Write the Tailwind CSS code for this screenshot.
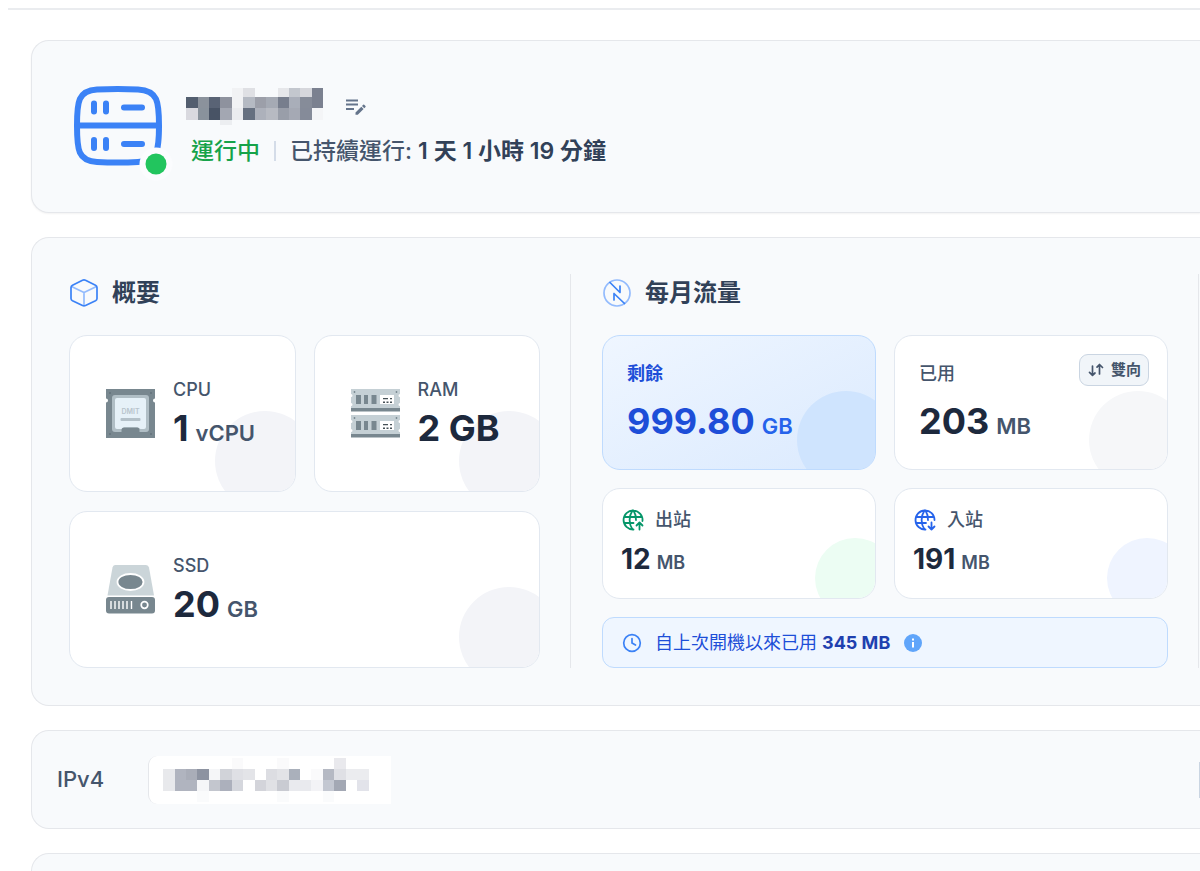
<!DOCTYPE html>
<html lang="zh-Hant">
<head>
    <meta charset="UTF-8">
    <meta name="viewport" content="width=device-width, initial-scale=1.0">
    <title>伺服器概要</title>
    <script src="https://cdn.jsdelivr.net/npm/@tailwindcss/browser@4"></script>
</head>
<body class="bg-white overflow-hidden font-['Inter','Noto_Sans_CJK_TC',sans-serif] text-slate-600 h-screen flex flex-col">
    <!-- Header bottom line -->
    <div class="ml-2 mt-2 h-[2px] shrink-0 bg-gray-200/80"></div>

    <main class="ml-[31px] mt-[30px] flex min-h-0 flex-1 flex-col gap-6">
        <!-- Server status -->
        <section class="flex shrink-0 items-start gap-[22px] rounded-l-[18px] border border-r-0 border-gray-200 bg-slate-50 pt-[43px] pb-11 pl-10 shadow-xs">
            <svg class="h-[84px] w-[92px] shrink-0 overflow-visible" viewBox="0 0 92 84" fill="none" stroke="#3b82f6" stroke-width="6" stroke-linecap="round">
                <path d="M5 41.500C5 18 6 6.500 25 5.500Q46 4.500 66 5.500C86 6.500 87 18 87 41.500C87 66 86 77 66 78Q46 79 25 78C6 77 5 66 5 41.500ZM5 41.500H87"/>
                <path d="M22 19.500V27.500M34 19.500V27.500M52 23.500H70M22 56V64M34 56V64M52 60H70"/>
                <circle cx="84" cy="80" r="16.500" fill="#fbfcfe" stroke="none"/>
                <circle cx="84" cy="80" r="10.500" fill="#22c55e" stroke="none"/>
            </svg>
            <div class="pt-1">
                <div class="flex items-center gap-[22px]">
                    <svg class="h-[37px] w-[138px]" viewBox="0 0 138 37" shape-rendering="crispEdges">
                        <path fill="#f1f2f4" d="M46 0h11v20H46z"/><path fill="#dfe0e4" d="M57 0h12v9H57z"/><path fill="#e6e7ea" d="M92 0h11v9H92z"/><path fill="#c3c7ce" d="M103 0h11v9h-11z"/><path fill="#d6d7dc" d="M114 0h12v9h-12z"/><path fill="#7b8190" d="M126 0h11v20h-11z"/>
                        <path fill="#535e6f" d="M0 9h12v11H0z"/><path fill="#8b929c" d="M12 9h11v11H12z"/><path fill="#596375" d="M23 9h11v11H23z"/><path fill="#8e929e" d="M34 9h12v11H34z"/><path fill="#b5bac3" d="M57 9h12v11H57z"/><path fill="#9c9fa9" d="M69 9h11v11H69z"/><path fill="#a5aab4" d="M80 9h12v11H80z"/><path fill="#777e8d" d="M92 9h11v11H92z"/><path fill="#a9aeb9" d="M103 9h11v11h-11z"/><path fill="#868c99" d="M114 9h12v11h-12z"/>
                        <path fill="#d9d9df" d="M0 20h12v12H0z"/><path fill="#89929c" d="M12 20h11v12H12z"/><path fill="#485365" d="M23 20h11v12H23z"/><path fill="#a3a7b2" d="M34 20h12v12H34z"/><path fill="#ebecef" d="M46 20h11v12H46z"/><path fill="#667080" d="M57 20h12v12H57z"/><path fill="#adb1bb" d="M69 20h11v12H69z"/><path fill="#b7bac2" d="M80 20h12v12H80z"/><path fill="#999ea9" d="M92 20h11v12H92z"/><path fill="#a5a9b4" d="M103 20h11v12h-11z"/><path fill="#858b99" d="M114 20h12v12h-12z"/><path fill="#f4f5f7" d="M126 20h11v12h-11z"/>
                        <path fill="#eceef1" d="M34 32h12v5H34z"/>
                    </svg>
                    <button type="button" aria-label="編輯">
                        <svg class="h-5 w-5" viewBox="0 0 20 20" fill="none" stroke="#64748b" stroke-width="1.900">
                            <path d="M0 3.500H12M0 7.500H12M0 12H8"/>
                            <path fill="#64748b" stroke="none" d="M9.500 15.500L15.300 9.700L17.600 12L11.800 17.800H9.500ZM16 9L17.200 7.800Q17.700 7.400 18.200 7.800L19.500 9.100Q19.900 9.600 19.500 10.100L18.300 11.300Z"/>
                        </svg>
                    </button>
                </div>
                <div class="mt-[9px] flex items-center pl-[5px] text-[23px] leading-[34px] font-medium">
                    <span class="text-[#16a34a]">運行中</span>
                    <span class="mx-[14px] h-5 w-[2px] bg-slate-300/80"></span>
                    <span>已持續運行: <span class="font-semibold text-slate-700">1 天 1 小時 19 分鐘</span></span>
                </div>
            </div>
        </section>

        <!-- Specs and traffic -->
        <section class="grid shrink-0 grid-cols-[502fr_627fr_2px] rounded-l-[18px] border border-r-0 border-gray-200 bg-slate-50 pt-9 pb-[37px] pl-[37px]">
            <div class="border-r border-gray-200 pr-[30px]">
                <h2 class="mb-[23px] flex h-[38px] items-center gap-[13px] text-2xl font-semibold text-slate-700">
                    <svg class="h-[30px] w-[30px]" viewBox="0 0 30 30" fill="none" stroke-width="1.700" stroke-linejoin="round">
                        <path stroke="#93bbfd" d="M2.500 8.500L15 14.500L27.500 8.500M15 14.500V27.500"/>
                        <path stroke="#3b82f6" d="M13.500 2.200Q15 1.500 16.500 2.200L26.500 7.200Q28 8 28 9.500V20.500Q28 22 26.500 22.800L16.500 27.600Q15 28.300 13.500 27.600L3.500 22.800Q2 22 2 20.500V9.500Q2 8 3.500 7.200Z"/>
                    </svg>
                    概要
                </h2>
                <div class="grid grid-cols-2 gap-x-[18px] gap-y-[19px]">
                    <div class="relative flex h-[157px] items-center gap-[18px] overflow-hidden rounded-[18px] border border-slate-200 bg-white pl-9">
                        <div class="absolute -right-5 -bottom-5 h-[100px] w-[100px] rounded-full bg-[#f3f4f8]"></div>
                        <svg class="relative h-[49px] w-[49px]" viewBox="0 0 49 49">
                            <path fill="#78878f" d="M0 0H49V9.500a2 2 0 0 0 0 4V49H0V13.500a2 2 0 0 0 0-4Z"/>
                            <rect x="6" y="6" width="37" height="37" rx="3" fill="#b0bec5"/>
                            <path fill="#e6f1f8" d="M11 9H38a2 2 0 0 1 2 2V38a2 2 0 0 1-2 2H34.500L32 38.500H18L15.500 40H11a2 2 0 0 1-2-2V11a2 2 0 0 1 2-2Z"/>
                            <path fill="#78878f" d="M15.500 43V41Q15.500 38.500 18 38.500H31Q33.500 38.500 33.500 41V43Z"/>
                            <rect x="14.500" y="29" width="20" height="3" rx="1" fill="#b4c1c9"/>
                            <text x="24.500" y="24.500" text-anchor="middle" font-size="7" font-weight="600" fill="#b8c4cc">DMIT</text>
                            <g fill="#56656d"><circle cx="4" cy="4" r=".8"/><circle cx="45" cy="4" r=".8"/><circle cx="4" cy="45" r=".8"/><circle cx="45" cy="45" r=".8"/></g>
                        </svg>
                        <div class="relative">
                            <div class="text-lg leading-7 font-medium">CPU</div>
                            <div class="flex items-baseline gap-[7px]">
                                <span class="text-[36px] leading-[48px] font-bold text-slate-800">1</span>
                                <span class="text-[22px] leading-7 font-semibold">vCPU</span>
                            </div>
                        </div>
                    </div>
                    <div class="relative flex h-[157px] items-center gap-[18px] overflow-hidden rounded-[18px] border border-slate-200 bg-white pl-9">
                        <div class="absolute -right-5 -bottom-5 h-[100px] w-[100px] rounded-full bg-[#f3f4f8]"></div>
                        <svg class="relative h-[49px] w-[49px]" viewBox="0 0 49 49">
                            <defs>
                                <g id="stick">
                                    <path fill="#c5d0d5" d="M0 0H49V5a1.500 1.500 0 0 0 0 3V14a1.500 1.500 0 0 0 0 3V19H0V17a1.500 1.500 0 0 0 0-3V8a1.500 1.500 0 0 0 0-3Z"/>
                                    <path fill="#78878f" d="M5 6h5v9H5zM13 6h4v9h-4zM20.500 6h5v9h-5zM0 19H49V22.500H0z"/>
                                    <path fill="#fff" d="M29 6H43V15H29z"/>
                                    <path fill="#465056" d="M32 9h5v1.200h-5zM39 9h2v1.200h-2zM32 12.500h2V14h-2zM35.500 12.500h2V14h-2zM39 12.500h2V14h-2z"/>
                                    <g fill="#78878f"><circle cx="3.500" cy="3" r=".9"/><circle cx="45.500" cy="3" r=".9"/></g>
                                </g>
                            </defs>
                            <use href="#stick"/>
                            <use href="#stick" y="26"/>
                        </svg>
                        <div class="relative">
                            <div class="text-lg leading-7 font-medium">RAM</div>
                            <div class="text-[36px] leading-[48px] font-bold text-slate-800">2 GB</div>
                        </div>
                    </div>
                    <div class="relative col-span-2 flex h-[157px] items-center gap-[18px] overflow-hidden rounded-[18px] border border-slate-200 bg-white pl-9">
                        <div class="absolute -right-5 -bottom-5 h-[100px] w-[100px] rounded-full bg-[#f3f4f8]"></div>
                        <svg class="relative h-[49px] w-[49px]" viewBox="0 0 49 49">
                            <path fill="#cbd5d9" d="M9 0H40Q42.500 0 43 2.500L48 30.500H1.500L6.500 2.500Q7 0 9 0Z"/>
                            <ellipse cx="24.500" cy="17" rx="13" ry="8" fill="#78878f" stroke="#fff" stroke-width="1.800"/>
                            <rect y="32" width="49" height="16.500" rx="3" fill="#78878f"/>
                            <path stroke="#fff" stroke-width="1.400" d="M5 36V44M9 36V44M13 36V44M17 36V44M21 36V44M25.500 36V44"/>
                            <circle cx="38.500" cy="40" r="3.300" fill="none" stroke="#fff" stroke-width="1.700"/>
                        </svg>
                        <div class="relative">
                            <div class="text-lg leading-7 font-medium">SSD</div>
                            <div class="flex items-baseline gap-[7px]">
                                <span class="text-[36px] leading-[48px] font-bold text-slate-800">20</span>
                                <span class="text-[22px] leading-7 font-semibold">GB</span>
                            </div>
                        </div>
                    </div>
                </div>
            </div>

            <div class="pr-[30px] pl-[31px]">
                <h2 class="mb-[23px] flex h-[38px] items-center gap-[13px] text-2xl font-semibold text-slate-700">
                    <svg class="h-[30px] w-[30px]" viewBox="0 0 30 30" fill="none" stroke-width="1.700" stroke-linejoin="round" stroke-linecap="round">
                        <circle cx="15" cy="15" r="13" stroke="#93bbfd"/>
                        <path stroke="#3b82f6" d="M8 4.500L18 14.500V8M22.500 25.500L12 15.500V22"/>
                    </svg>
                    每月流量
                </h2>
                <div class="grid grid-cols-2 gap-[18px]">
                    <div class="relative h-[135px] overflow-hidden rounded-[18px] border border-[#bfdbfe] bg-linear-to-br from-[#eff6ff] to-[#dbeafe] pt-6 pl-6">
                        <div class="absolute -right-5 -bottom-5 h-[98px] w-[98px] rounded-full bg-[#cfe4fe]"></div>
                        <div class="relative text-lg leading-7 font-semibold text-[#1d4ed8]">剩餘</div>
                        <div class="relative mt-[9px] flex items-baseline gap-[7px]">
                            <span class="text-[36px] leading-[48px] font-bold text-[#1d4ed8]">999.80</span>
                            <span class="text-[22px] leading-7 font-semibold text-[#2563eb]">GB</span>
                        </div>
                    </div>
                    <div class="relative h-[135px] overflow-hidden rounded-[18px] border border-slate-200 bg-white pt-6 pl-6">
                        <div class="absolute -right-5 -bottom-5 h-[98px] w-[98px] rounded-full bg-[#f6f7f9]"></div>
                        <div class="relative text-lg leading-7 font-medium">已用</div>
                        <div class="relative mt-[9px] flex items-baseline gap-[7px]">
                            <span class="text-[36px] leading-[48px] font-bold text-slate-800">203</span>
                            <span class="text-[22px] leading-7 font-semibold">MB</span>
                        </div>
                        <button type="button" class="absolute top-[18px] right-[18px] flex h-8 items-center gap-[7px] rounded-[9px] border border-slate-300 bg-slate-100 pr-[7px] pl-2 text-[15px] font-semibold text-slate-600">
                            <svg class="h-4 w-4" viewBox="0 0 16 16" fill="none" stroke="currentColor" stroke-width="1.700" stroke-linecap="round" stroke-linejoin="round">
                                <path d="M4.500 4V13M1.500 10.300L4.500 13.300L7 11M11.500 12V3M9 5.200L11.500 2.500L14.500 5.500"/>
                            </svg>
                            雙向
                        </button>
                    </div>
                    <div class="relative h-[111px] overflow-hidden rounded-[18px] border border-slate-200 bg-white pt-[17px] pl-[18px]">
                        <div class="absolute -right-5 -bottom-5 h-20 w-20 rounded-full bg-[#ecfdf3]"></div>
                        <div class="relative flex items-center gap-[10px] text-lg leading-7 font-medium">
                            <svg class="h-6 w-6" viewBox="0 0 24 24" fill="none" stroke="#059669" stroke-width="1.800" stroke-linecap="round" stroke-linejoin="round">
                                <path d="M21.500 13A9.500 9.500 0 1 0 12.500 21.500M3.200 9H20.800M3.200 15H12.500M11.500 2.500A17 17 0 0 0 11.500 21.500M12.500 2.500A17 17 0 0 1 15 12"/>
                                <path d="M18.500 21.500V14.500M15.500 17.500L18.500 14.500L21.500 17.500"/>
                            </svg>
                            出站
                        </div>
                        <div class="relative mt-[7px] flex items-baseline gap-[6px]">
                            <span class="text-[28px] leading-9 font-bold text-slate-800">12</span>
                            <span class="text-lg leading-6 font-semibold">MB</span>
                        </div>
                    </div>
                    <div class="relative h-[111px] overflow-hidden rounded-[18px] border border-slate-200 bg-white pt-[17px] pl-[18px]">
                        <div class="absolute -right-5 -bottom-5 h-20 w-20 rounded-full bg-[#eff4ff]"></div>
                        <div class="relative flex items-center gap-[10px] text-lg leading-7 font-medium">
                            <svg class="h-6 w-6" viewBox="0 0 24 24" fill="none" stroke="#2563eb" stroke-width="1.800" stroke-linecap="round" stroke-linejoin="round">
                                <path d="M21.500 12A9.500 9.500 0 1 0 12.500 21.500M3.200 9H20.800M3.200 15H13M11.500 2.500A17 17 0 0 0 11.500 21.500M12.500 2.500A17 17 0 0 1 15 12"/>
                                <path d="M18.500 14.500V21.500M15.500 18.500L18.500 21.500L21.500 18.500"/>
                            </svg>
                            入站
                        </div>
                        <div class="relative mt-[7px] flex items-baseline gap-[6px]">
                            <span class="text-[28px] leading-9 font-bold text-slate-800">191</span>
                            <span class="text-lg leading-6 font-semibold">MB</span>
                        </div>
                    </div>
                    <div class="col-span-2 flex h-[51px] items-center rounded-xl border border-[#bfdbfe] bg-[#eff6ff] pl-[18px] text-lg text-[#1d4ed8]">
                        <svg class="mr-3 h-[22px] w-[22px]" viewBox="0 0 22 22" fill="none" stroke="#3b82f6" stroke-width="1.700" stroke-linecap="round">
                            <circle cx="11" cy="11" r="8.300"/><path d="M11 6.500V11L14.500 13"/>
                        </svg>
                        <span>自上次開機以來已用 <span class="font-bold text-[#1e40af]">345 MB</span></span>
                        <svg class="ml-[13px] h-5 w-5" viewBox="0 0 20 20">
                            <circle cx="10" cy="10" r="9" fill="#60a5fa"/><path stroke="#fff" stroke-width="2" d="M10 9V14.500M10 5.500V7.500"/>
                        </svg>
                    </div>
                </div>
            </div>
            <div class="w-px bg-gray-200"></div>
        </section>

        <!-- IP address -->
        <section class="flex h-[99px] shrink-0 items-center rounded-l-[18px] border border-r-0 border-gray-200 bg-slate-50 pl-[25px]">
            <span class="w-[91px] text-[22px] font-medium">IPv4</span>
            <div class="flex h-12 items-center rounded-l-[9px] border-l border-gray-200 bg-white pl-[14px]">
                <svg class="h-12 w-[228px]" viewBox="0 0 228 48" shape-rendering="crispEdges">
                    <path fill="#fafafb" d="M69 2h11v11H69zM114 2h12v11h-12zM148 13h23v11h-23z"/>
                    <path fill="#e9e9ed" d="M171 2h12v11h-12z"/>
                    <path fill="#e8e9ec" d="M0 13h12v22H0z"/><path fill="#b0b4bf" d="M12 13h11v22H12zM23 24h11v11H23z"/><path fill="#a9adb8" d="M23 13h11v11H23z"/><path fill="#8d93a1" d="M34 13h12v11H34z"/><path fill="#f5f6f8" d="M46 13h11v11H46zM34 24h12v11H34z"/><path fill="#d1d3d9" d="M57 13h12v11H57z"/><path fill="#dfe0e5" d="M69 13h11v11H69z"/><path fill="#e3e4e8" d="M80 13h12v11H80z"/><path fill="#dcdde2" d="M103 13h11v11h-11z"/><path fill="#e2e3e7" d="M114 13h12v11h-12z"/><path fill="#aab0bb" d="M126 13h11v11h-11z"/><path fill="#b5b9c3" d="M160 13h11v11h-11z"/><path fill="#dfe0e5" d="M171 13h12v11h-12z"/><path fill="#ebecef" d="M183 13h23v11h-23z"/>
                    <path fill="#c3c6ce" d="M46 24h11v11H46z"/><path fill="#acb0bc" d="M57 24h12v11H57z"/><path fill="#d5d7dd" d="M69 24h11v11H69z"/><path fill="#d3d4da" d="M92 24h11v11H92z"/><path fill="#e0e1e5" d="M103 24h11v11h-11z"/><path fill="#c9cbd2" d="M114 24h12v11h-12z"/><path fill="#e9eaee" d="M126 24h22v11h-22z"/><path fill="#f3f3f6" d="M148 24h12v11h-12z"/><path fill="#c3c7d1" d="M160 24h11v11h-11z"/><path fill="#a3a8b4" d="M171 24h12v11h-12z"/><path fill="#e2e3ea" d="M194 24h12v11h-12z"/>
                    <path fill="#fafbfc" d="M34 35h12v11H34zM114 35h12v11h-12zM160 35h11v11h-11z"/>
                </svg>
            </div>
            <div class="ml-auto h-9 w-px bg-slate-300"></div>
        </section>

        <section class="min-h-0 flex-1 rounded-tl-[18px] border-t border-l border-gray-200 bg-slate-50"></section>
    </main>
</body>
</html>
